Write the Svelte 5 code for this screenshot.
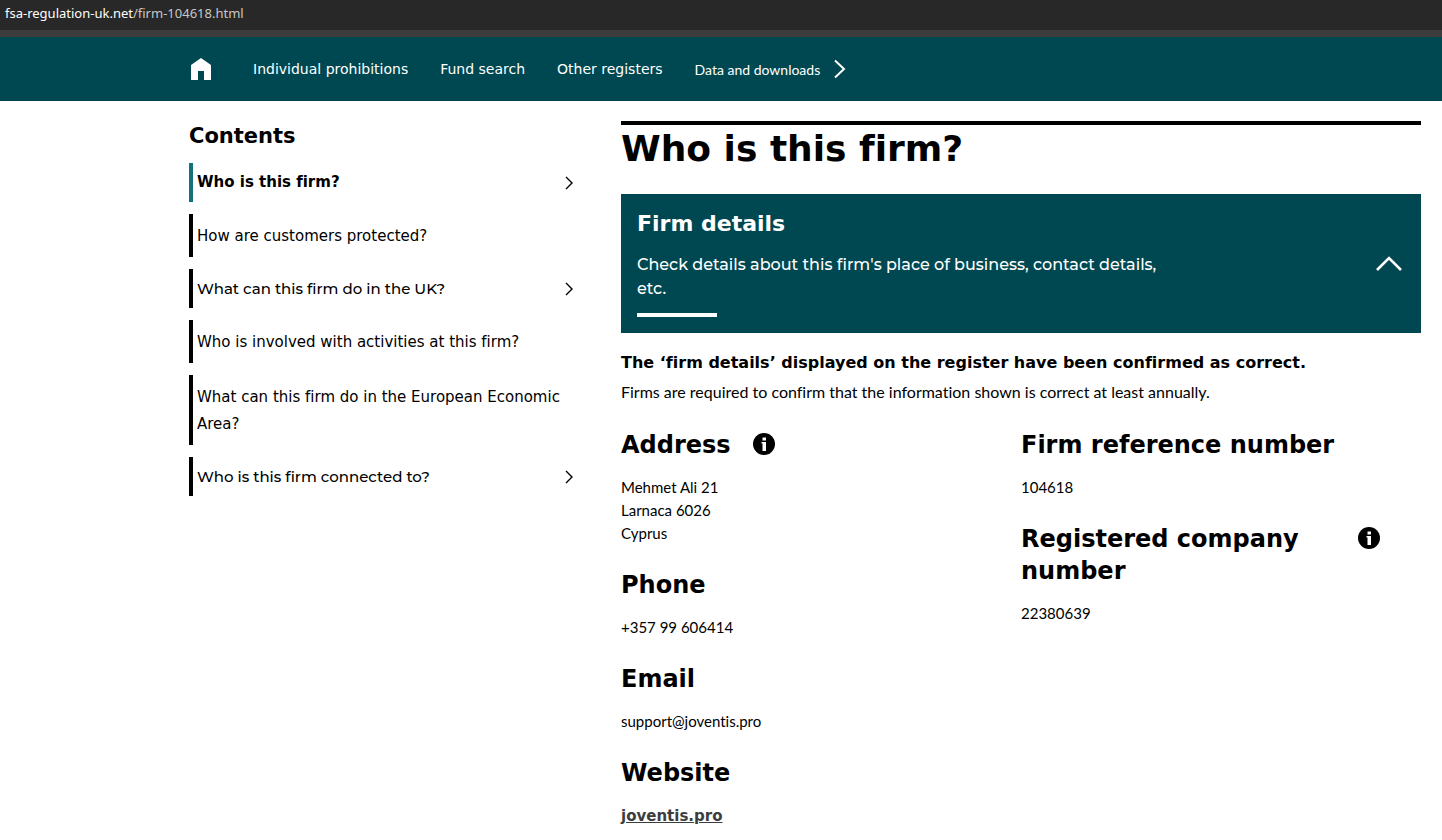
<script lang="ts">
  const address = 'fsa-regulation-uk.net';
  const path = '/firm-104618.html';

  const navLinks = ['Individual prohibitions', 'Fund search', 'Other registers'];

  const contents = [
    { label: 'Who is this firm?', expandable: true, active: true },
    { label: 'How are customers protected?' },
    { label: 'What can this firm do in the UK?', expandable: true },
    { label: 'Who is involved with activities at this firm?' },
    { label: 'What can this firm do in the European Economic Area?' },
    { label: 'Who is this firm connected to?', expandable: true }
  ];

  let open = $state(true);
</script>

<div class="address-bar">
  <span class="host">{address}</span><span>{path}</span>
</div>

<header>
  <nav>
    <a class="home" href="#home" aria-label="Home">
      <svg width="20" height="22" viewBox="0 0 20 22">
        <path d="M10 0L20 7V22H13V13H7V22H0V7Z" fill="#fff" />
      </svg>
    </a>
    {#each navLinks as link}
      <a href="#nav">{link}</a>
    {/each}
    <button class="downloads">
      Data and downloads
      <svg width="12" height="20" viewBox="0 0 12 20">
        <path d="M1 1.5L10 10L1 18.5" fill="none" stroke="#fff" stroke-width="2" />
      </svg>
    </button>
  </nav>
</header>

<div class="page">
  <aside>
    <h2>Contents</h2>
    <ul>
      {#each contents as item}
        <li class:active={item.active}>
          {#if item.expandable}
            <button class="entry">
              <span>{item.label}</span>
              <svg width="8" height="14" viewBox="0 0 8 14">
                <path d="M1 1L7 7L1 13" fill="none" stroke="#000" stroke-width="1.4" />
              </svg>
            </button>
          {:else}
            <a class="entry" href="#section">{item.label}</a>
          {/if}
        </li>
      {/each}
    </ul>
  </aside>

  <main>
    <h1>Who is this firm?</h1>

    <button class="panel" aria-expanded={open} onclick={() => (open = !open)}>
      <span class="panel-text">
        <span class="panel-title">Firm details</span>
        <span class="panel-desc">
          Check details about this firm's place of business, contact details, etc.
        </span>
        <span class="panel-bar"></span>
      </span>
      <svg class:closed={!open} width="26" height="16" viewBox="0 0 26 16">
        <path d="M1 14L13 2L25 14" fill="none" stroke="#fff" stroke-width="2.6" />
      </svg>
    </button>

    {#if open}
      <p class="confirmed">The ‘firm details’ displayed on the register have been confirmed as correct.</p>
      <p class="note">Firms are required to confirm that the information shown is correct at least annually.</p>

      <div class="details">
        <div class="column">
          <section>
            <div class="heading">
              <h3>Address</h3>
              {@render info('About the address')}
            </div>
            <p>Mehmet Ali 21<br />Larnaca 6026<br />Cyprus</p>
          </section>
          <section>
            <h3>Phone</h3>
            <p>+357 99 606414</p>
          </section>
          <section>
            <h3>Email</h3>
            <p>support@joventis.pro</p>
          </section>
          <section>
            <h3>Website</h3>
            <p><a class="site" href="#website">joventis.pro</a></p>
          </section>
        </div>

        <div class="column">
          <section>
            <h3>Firm reference number</h3>
            <p>104618</p>
          </section>
          <section>
            <div class="heading wide">
              <h3>Registered company number</h3>
              {@render info('About the company number')}
            </div>
            <p>22380639</p>
          </section>
        </div>
      </div>
    {/if}
  </main>
</div>

{#snippet info(label)}
  <button class="info" aria-label={label}>
    <svg width="22" height="22" viewBox="0 0 22 22">
      <circle cx="11" cy="11" r="11" />
      <path d="M9.5 4.5h3.5v3H9.5zM8.5 9H13v9H9.5v-7.5h-1z" fill="#fff" />
    </svg>
  </button>
{/snippet}

<style>
:global(body) {
  background: #fff;
  color: #000;
  font-family: Lato, sans-serif;
  font-size: 15px;
  line-height: 23px;
  font-variant-ligatures: none;
}

h1, h2, h3, p, ul {
  margin: 0;
  padding: 0;
}

h1, h2, h3, .panel-title, .confirmed, .site {
  font-family: Verdana, "DejaVu Sans", sans-serif;
  font-weight: 700;
}

button {
  border: 0;
  padding: 0;
  background: none;
  color: inherit;
  font: inherit;
  font-variant-ligatures: none;
  text-align: left;
  cursor: pointer;
}

a {
  color: inherit;
  text-decoration: none;
}

svg {
  display: block;
  flex: none;
}

.address-bar {
  padding: 1px 5px 5px;
  background: #282828;
  border-bottom: 7px solid #3c3c3c;
  color: #c7c7c7;
  font-family: "Noto Sans", sans-serif;
  font-size: 13px;
  line-height: 24px;
}

.host {
  color: #fff;
}

header {
  background: #004851;
  color: #fff;
}

nav {
  display: flex;
  align-items: center;
  gap: 32px;
  height: 64px;
  padding-left: 191px;
  font-family: Verdana, "DejaVu Sans", sans-serif;
  font-size: 14px;
}

.home {
  margin-right: 10px;
}

.downloads {
  display: flex;
  align-items: center;
  gap: 14px;
  font-family: Lato, sans-serif;
}

.page {
  display: grid;
  grid-template-columns: 1fr 2fr;
  gap: 32px;
  padding: 20px 21px 12px 189px;
}

aside h2 {
  margin-bottom: 12px;
  font-size: 21px;
  line-height: 30px;
}

ul {
  display: flex;
  flex-direction: column;
  gap: 12px;
  margin-right: 16px;
  list-style: none;
}

li {
  border-left: 4px solid #000;
  font-family: Verdana, "DejaVu Sans", sans-serif;
}

li.active {
  border-color: #13717c;
}

.entry {
  display: flex;
  justify-content: space-between;
  align-items: center;
  box-sizing: border-box;
  width: 100%;
  padding: 9px 0 7px 4px;
  line-height: 27px;
}

button.entry {
  padding: 8px 0 8px 4px;
  font-family: Montserrat, sans-serif;
  font-weight: 500;
  line-height: 23px;
}

.active button.entry {
  font-family: Verdana, "DejaVu Sans", sans-serif;
  font-weight: 700;
}

h1 {
  padding-bottom: 22px;
  border-top: 4px solid #000;
  font-size: 36px;
  line-height: 47px;
}

.panel {
  display: flex;
  justify-content: space-between;
  align-items: center;
  width: 100%;
  margin-bottom: 18px;
  padding: 16px 19px 16px 16px;
  background: #004851;
  color: #fff;
}

.panel-text {
  display: flex;
  flex-direction: column;
  width: 72%;
}

.panel-title {
  font-size: 22px;
  line-height: 28px;
}

.panel-desc {
  margin: 15px 0 12px;
  font-family: Montserrat, sans-serif;
  font-size: 16px;
  font-weight: 500;
  line-height: 24px;
}

.panel-bar {
  width: 80px;
  height: 4px;
  background: #fff;
}

.closed {
  transform: rotate(180deg);
}

.confirmed {
  margin-bottom: 6px;
  font-size: 16px;
}

.note {
  font-size: 16px;
}

.details {
  display: grid;
  grid-template-columns: 1fr 1fr;
  margin-top: 26px;
}

.column {
  display: flex;
  flex-direction: column;
  gap: 23px;
}

h3 {
  margin-bottom: 15px;
  font-size: 24px;
  line-height: 32px;
}

.column section + section {
  padding-top: 1px;
}

.heading {
  display: flex;
  align-items: flex-start;
  gap: 22px;
}

.wide {
  justify-content: space-between;
  margin-right: 41px;
}

.info {
  margin-top: 4px;
}

.site {
  color: #3d3d3d;
  text-decoration: underline;
}
</style>
